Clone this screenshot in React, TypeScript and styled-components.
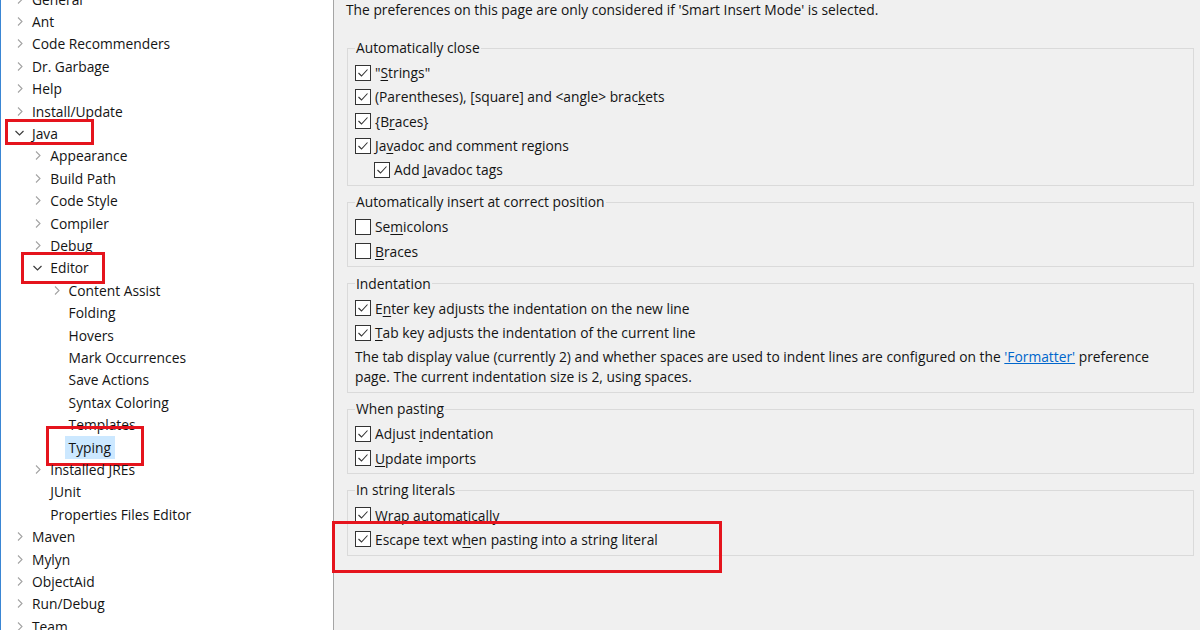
import React from 'react'
import styled, { createGlobalStyle } from 'styled-components'

type Mark = { left: number; top: number; width: number; height: number }

type TreeNode = {
  label: string
  level: number
  twisty?: 'open' | 'closed'
  selected?: boolean
  mark?: Mark
}

const treeNodes: TreeNode[] = [
  { label: 'General', level: 0, twisty: 'closed' },
  { label: 'Ant', level: 0, twisty: 'closed' },
  { label: 'Code Recommenders', level: 0, twisty: 'closed' },
  { label: 'Dr. Garbage', level: 0, twisty: 'closed' },
  { label: 'Help', level: 0, twisty: 'closed' },
  { label: 'Install/Update', level: 0, twisty: 'closed' },
  { label: 'Java', level: 0, twisty: 'open', mark: { left: 4, top: -3.3, width: 89, height: 26 } },
  { label: 'Appearance', level: 1, twisty: 'closed' },
  { label: 'Build Path', level: 1, twisty: 'closed' },
  { label: 'Code Style', level: 1, twisty: 'closed' },
  { label: 'Compiler', level: 1, twisty: 'closed' },
  { label: 'Debug', level: 1, twisty: 'closed' },
  { label: 'Editor', level: 1, twisty: 'open', mark: { left: 20, top: -4.8, width: 84, height: 32 } },
  { label: 'Content Assist', level: 2, twisty: 'closed' },
  { label: 'Folding', level: 2 },
  { label: 'Hovers', level: 2 },
  { label: 'Mark Occurrences', level: 2 },
  { label: 'Save Actions', level: 2 },
  { label: 'Syntax Coloring', level: 2 },
  { label: 'Templates', level: 2 },
  { label: 'Typing', level: 2, selected: true, mark: { left: 45, top: -10.2, width: 98, height: 40 } },
  { label: 'Installed JREs', level: 1, twisty: 'closed' },
  { label: 'JUnit', level: 1 },
  { label: 'Properties Files Editor', level: 1 },
  { label: 'Maven', level: 0, twisty: 'closed' },
  { label: 'Mylyn', level: 0, twisty: 'closed' },
  { label: 'ObjectAid', level: 0, twisty: 'closed' },
  { label: 'Run/Debug', level: 0, twisty: 'closed' },
  { label: 'Team', level: 0, twisty: 'closed' },
]

const ChevronRight = () => (
  <svg width="6" height="9" viewBox="0 0 6 9">
    <polyline points="1,0.5 5,4.5 1,8.5" fill="none" stroke="#a3a3a3" strokeWidth="1.1" />
  </svg>
)

const ChevronDown = () => (
  <svg width="9" height="6" viewBox="0 0 9 6">
    <polyline points="0.5,1 4.5,5 8.5,1" fill="none" stroke="#3c3c3c" strokeWidth="1.2" />
  </svg>
)

const CheckMark = () => (
  <svg width="14" height="14" viewBox="0 0 14 14">
    <polyline points="2.5,7 5.5,10 11.5,3.5" fill="none" stroke="#333" strokeWidth="1.1" />
  </svg>
)

type CheckProps = {
  checked?: boolean
  nested?: boolean
  mark?: Mark
  children: React.ReactNode
}

const Check = ({ checked, nested, mark, children }: CheckProps) => (
  <CheckRow $nested={nested}>
    <CheckBox>{checked && <CheckMark />}</CheckBox>
    <span>{children}</span>
    {mark && <Annotation style={mark} />}
  </CheckRow>
)

export default function App() {
  return (
    <>
      <GlobalStyle />
      <Window>
        <TreePane>
          <TreeList>
            {treeNodes.map((node) => (
              <TreeRow key={node.label} $level={node.level}>
                <Twisty $open={node.twisty === 'open'}>
                  {node.twisty === 'open' && <ChevronDown />}
                  {node.twisty === 'closed' && <ChevronRight />}
                </Twisty>
                <TreeLabel $selected={node.selected}>{node.label}</TreeLabel>
                {node.mark && <Annotation style={node.mark} />}
              </TreeRow>
            ))}
          </TreeList>
        </TreePane>

        <PrefPane>
          <Intro>The preferences on this page are only considered if 'Smart Insert Mode' is selected.</Intro>
          <Groups>
            <Group>
              <legend>Automatically close</legend>
              <Check checked>
                "<Mnemonic>S</Mnemonic>trings"
              </Check>
              <Check checked>
                (Parentheses), [square] and &lt;angle&gt; brac<Mnemonic>k</Mnemonic>ets
              </Check>
              <Check checked>
                {'{'}B<Mnemonic>r</Mnemonic>aces{'}'}
              </Check>
              <Check checked>
                Ja<Mnemonic>v</Mnemonic>adoc and comment regions
              </Check>
              <Check checked nested>
                Add <Mnemonic>J</Mnemonic>avadoc tags
              </Check>
            </Group>

            <Group>
              <legend>Automatically insert at correct position</legend>
              <Check>
                Se<Mnemonic>m</Mnemonic>icolons
              </Check>
              <Check>
                <Mnemonic>B</Mnemonic>races
              </Check>
            </Group>

            <Group>
              <legend>Indentation</legend>
              <Check checked>
                E<Mnemonic>n</Mnemonic>ter key adjusts the indentation on the new line
              </Check>
              <Check checked>
                <Mnemonic>T</Mnemonic>ab key adjusts the indentation of the current line
              </Check>
              <Note>
                The tab display value (currently 2) and whether spaces are used to indent lines are configured on the{' '}
                <PrefLink>'Formatter'</PrefLink> preference
                <br />
                page. The current indentation size is 2, using spaces.
              </Note>
            </Group>

            <Group>
              <legend>When pasting</legend>
              <Check checked>
                Adjust <Mnemonic>i</Mnemonic>ndentation
              </Check>
              <Check checked>
                <Mnemonic>U</Mnemonic>pdate imports
              </Check>
            </Group>

            <Group>
              <legend>In string literals</legend>
              <Check checked>
                <Mnemonic>W</Mnemonic>rap automatically
              </Check>
              <Check checked mark={{ left: -23, top: -5.8, width: 390, height: 52 }}>
                Escape text w<Mnemonic>h</Mnemonic>en pasting into a string literal
              </Check>
            </Group>
          </Groups>
        </PrefPane>
      </Window>
    </>
  )
}

const GlobalStyle = createGlobalStyle`
  html, body {
    margin: 0;
    padding: 0;
  }

  body {
    width: 1200px;
    height: 630px;
    overflow: hidden;
    font-family: 'Open Sans', 'Noto Sans', sans-serif;
    font-size: 13.8px;
    color: #141414;
    background: #f0f0f0;
  }
`

const Window = styled.div`
  display: grid;
  grid-template-columns: 334px 1fr;
  height: 630px;
  overflow: hidden;
`

const TreePane = styled.div`
  background: #fff;
  border-left: 1px solid #3a86d4;
  border-right: 1px solid #a5a5a5;
  overflow: hidden;
`

const TreeList = styled.div`
  margin-top: -12.2px;
`

const TreeRow = styled.div<{ $level: number }>`
  position: relative;
  display: flex;
  align-items: center;
  height: 22.42px;
  padding-left: ${(p) => 12 + p.$level * 18.3}px;
  white-space: nowrap;
`

const Twisty = styled.span<{ $open: boolean }>`
  display: flex;
  align-items: center;
  width: 19px;
  flex: none;

  svg {
    margin-left: ${(p) => (p.$open ? 2 : 4)}px;
  }
`

const TreeLabel = styled.span<{ $selected?: boolean }>`
  margin-left: -4px;
  padding: 0 4px;
  line-height: 23px;
  background: ${(p) => (p.$selected ? '#cce8ff' : 'transparent')};
`

const Annotation = styled.div`
  position: absolute;
  box-sizing: border-box;
  border: 3px solid #e5141d;
  pointer-events: none;
`

const PrefPane = styled.div`
  padding: 0 6px 0 12px;
  display: flex;
  flex-direction: column;
`

const Intro = styled.div`
  line-height: 20px;
`

const Groups = styled.div`
  margin-top: 18px;
  display: flex;
  flex-direction: column;
  gap: 6.3px;
`

const Group = styled.fieldset`
  margin: 0 0 0 1px;
  padding: 2.5px 7px 3px 7px;
  border: 1px solid #dadada;
  min-inline-size: 0;

  legend {
    padding: 0 1px;
    line-height: 20px;
  }
`

const CheckRow = styled.div<{ $nested?: boolean }>`
  position: relative;
  display: flex;
  align-items: center;
  height: 24.3px;
  padding-left: ${(p) => (p.$nested ? 19 : 0)}px;
  white-space: nowrap;
`

const CheckBox = styled.span`
  display: flex;
  align-items: center;
  justify-content: center;
  box-sizing: border-box;
  width: 16px;
  height: 16px;
  margin-right: 4px;
  flex: none;
  border: 1px solid #333;
  background: #fff;
`

const Mnemonic = styled.u`
  text-underline-offset: 2px;
`

const Note = styled.p`
  margin: 2px 0 2px;
  line-height: 20px;
`

const PrefLink = styled.a`
  color: #0066cc;
  text-decoration: underline;
  cursor: pointer;
`
